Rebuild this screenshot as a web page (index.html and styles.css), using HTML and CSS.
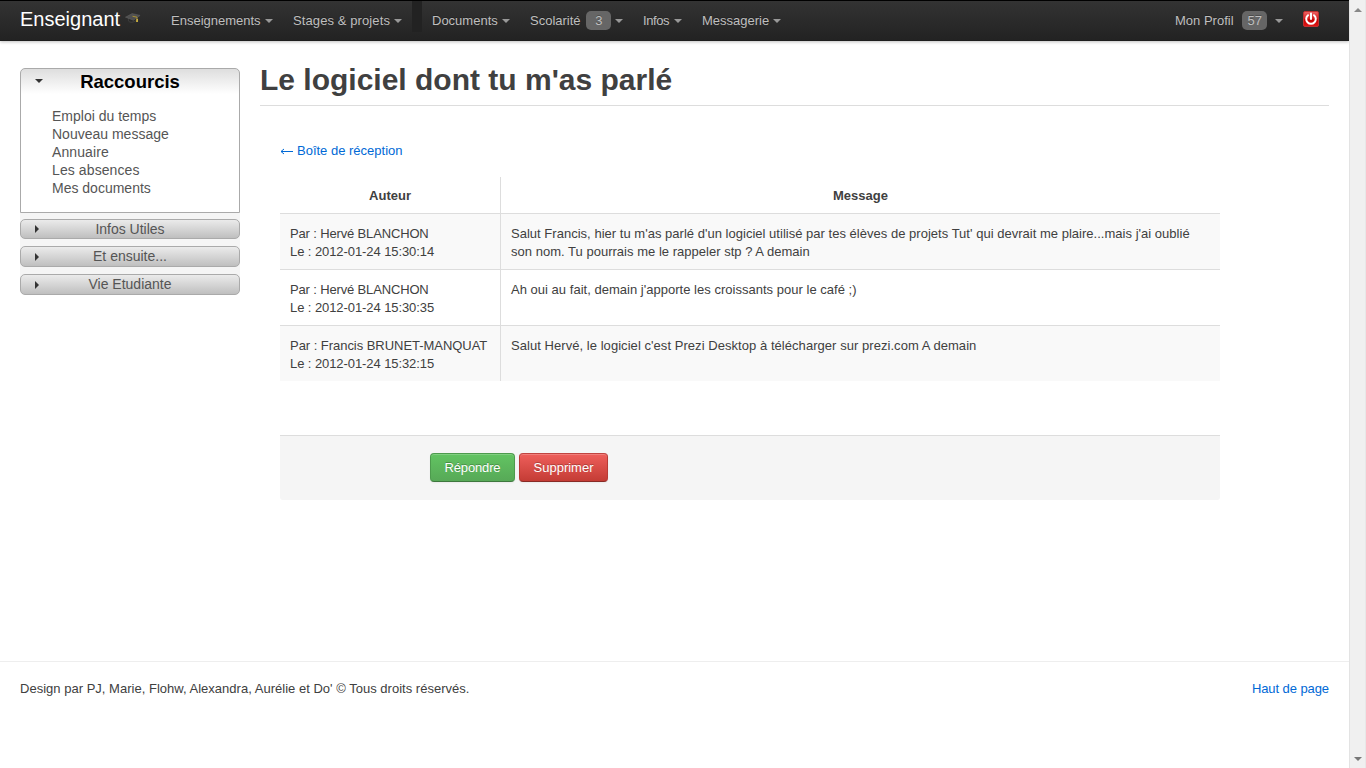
FILE: index.html
```html
<!DOCTYPE html>
<html lang="fr">
<head>
<meta charset="utf-8">
<title>Le logiciel dont tu m'as parlé</title>
<link rel="stylesheet" href="styles.css">
</head>
<body>
<div class="viewport">
<div class="page">
  <header class="topbar">
    <a class="brand">Enseignant</a>
    <svg class="cap" width="16" height="13" viewBox="0 0 18 14"><path d="M4 6v4q3 3 9-1V6z" fill="#292929" stroke="#494949" stroke-width=".7"/><path d="M.5 5.500 8 1.500 17 3.500 9.500 9z" fill="#505050" stroke="#636363" stroke-width=".6"/><path d="M8.500 4.500 13.500 5.500V9.500" fill="none" stroke="#b59a30" stroke-width="1"/><path d="M13 7.500h1.500v3.500h-2z" fill="#d9bc43"/></svg>
    <nav class="menu">
      <a class="item w-ens"><span>Enseignements</span><i class="caret"></i></a>
      <a class="item w-sta"><span>Stages &amp; projets</span><i class="caret"></i></a>
      <i class="divider"></i>
      <a class="item w-doc"><span>Documents</span><i class="caret"></i></a>
      <a class="item w-sco"><span>Scolarité</span><b class="badge">3</b><i class="caret"></i></a>
      <a class="item w-inf"><span>Infos</span><i class="caret"></i></a>
      <a class="item w-mes"><span>Messagerie</span><i class="caret"></i></a>
    </nav>
    <a class="item w-pro"><span>Mon Profil</span><b class="badge">57</b><i class="caret"></i></a>
    <svg class="power" width="16" height="16" viewBox="0 0 16 16"><defs><linearGradient id="r" x2="0" y2="1"><stop stop-color="#e66"/><stop offset=".5" stop-color="#d41c1c"/><stop offset=".55" stop-color="#c40000"/><stop offset="1" stop-color="#e01818"/></linearGradient></defs><rect x=".5" y=".5" width="15" height="15" rx="1.500" fill="url(#r)" stroke="#c03030"/><path d="M5 4.200A4.800 4.800 0 1 0 11 4.200M8 2.500V8" fill="none" stroke="#fff" stroke-width="2" stroke-linecap="round"/></svg>
  </header>
  <div class="columns">
    <aside class="side">
      <section class="open">
        <h3><i class="arrow down"></i>Raccourcis</h3>
        <ul>
          <li>Emploi du temps</li>
          <li>Nouveau message</li>
          <li class="wide">Annuaire</li>
          <li class="wide">Les absences</li>
          <li>Mes documents</li>
        </ul>
      </section>
      <div class="closed first"><i class="arrow"></i><span>Infos Utiles</span></div>
      <div class="closed"><i class="arrow"></i><span>Et ensuite...</span></div>
      <div class="closed"><i class="arrow"></i><span>Vie Etudiante</span></div>
    </aside>
    <main class="main">
      <h1>Le logiciel dont tu m'as parlé</h1>
      <div class="content">
        <a class="back link"><svg width="13" height="9" viewBox="0 0 13 9"><path d="M1 4.500H13M4 2 1 4.500 4 7" fill="none" stroke="currentColor"/></svg><span>Boîte de réception</span></a>
        <table>
          <tr><th class="author">Auteur</th><th>Message</th></tr>
          <tr class="odd"><td><span class="name">Par : Hervé BLANCHON</span><br><span class="date">Le : 2012-01-24 15:30:14</span></td><td>Salut Francis, hier tu m'as parlé d'un logiciel utilisé par tes élèves de projets Tut' qui devrait me plaire...mais j'ai oublié<br>son nom. Tu pourrais me le rappeler stp ? A demain</td></tr>
          <tr><td><span class="name">Par : Hervé BLANCHON</span><br><span class="date">Le : 2012-01-24 15:30:35</span></td><td>Ah oui au fait, demain j'apporte les croissants pour le café ;)</td></tr>
          <tr class="odd"><td><span class="long">Par : Francis BRUNET-MANQUAT</span><br><span class="date">Le : 2012-01-24 15:32:15</span></td><td class="last">Salut Hervé, le logiciel c'est Prezi Desktop à télécharger sur prezi.com A demain</td></tr>
        </table>
        <div class="actions"><button class="btn green">Répondre</button><button class="btn red">Supprimer</button></div>
      </div>
    </main>
  </div>
  <footer class="footer"><span>Design par PJ, Marie, Flohw, Alexandra, Aurélie et Do' © Tous droits réservés.</span><a class="link">Haut de page</a></footer>
</div>
<div class="scrollbar"><i class="up"></i><i class="dn"></i></div>
</div>
</body>
</html>
```
FILE: styles.css
```css
* { box-sizing: border-box; }
body { margin: 0; background: #fff; color: #404040; font: 13px/18px "Liberation Sans", Arial, sans-serif; overflow: hidden; }
.viewport { display: flex; height: 768px; }
.page { width: 1349px; display: flex; flex-direction: column; }
.topbar { height: 41px; flex: none; display: flex; align-items: flex-start; border-top: 1px solid #000; background: linear-gradient(#333, #222); box-shadow: 0 1px 3px rgba(0,0,0,.25), inset 0 -1px 0 rgba(0,0,0,.1); color: #bfbfbf; white-space: nowrap; }
.brand { width: 125px; padding: 8px 0 0 20px; font-size: 20px; line-height: 20px; color: #fff; }
.cap { margin-top: 11px; width: 16px; }
.menu { display: flex; margin-left: 20px; }
.item { height: 39px; padding: 1px 10px 0; display: flex; align-items: center; justify-content: space-between; text-shadow: 0 -1px 0 rgba(0,0,0,.25); }
.caret { border: 4px solid transparent; border-top-color: #999; border-bottom: 0; }
.w-ens { width: 122px; } .w-sta { width: 129px; } .w-doc { width: 98px; }
.w-sta span { letter-spacing: .1px; }
.w-sco { width: 113px; } .w-inf { width: 59px; } .w-mes { width: 99px; }
.w-inf span { letter-spacing: -.4px; }
.w-pro { width: 128px; margin-left: auto; margin-right: 10px; }
.divider { width: 10px; height: 31px; background: #222; }
.badge { background: #666; border-radius: 5px; width: 25px; text-align: center; height: 19px; font-weight: normal; line-height: 19px; margin-top: -1px; }
.w-sco .badge { margin-left: 2px; }
.w-pro .badge { margin-left: 1px; }
.power { margin: 10px 30px 0 0; }
.columns { display: flex; height: 620px; }
.side { width: 220px; margin: 27px 20px 0 20px; color: #555; font-size: 14px; align-self: flex-start; background: #f5f5f5; border-radius: 6px; }
.open { height: 145px; border: 1px solid #aaa; border-radius: 5px 5px 0 0; background: linear-gradient(#dedede, #fff 25px); }
.open h3 { margin: 0; height: 25px; line-height: 25px; font-size: 18.5px; color: #000; display: flex; align-items: center; justify-content: center; position: relative; }
.open ul { list-style: none; margin: 0; padding: 13px 0 0 31px; }
.wide { letter-spacing: .1px; }
.arrow { position: absolute; left: 14px; top: 50%; border: 4px solid transparent; border-left-color: #333; border-right: 0; margin-top: -4px; }
.arrow.down { border: 4px solid transparent; border-top-color: #333; border-bottom: 0; margin-top: -3px; }
.closed { position: relative; height: 21px; margin-top: 6px; border: 1px solid #aaa; border-radius: 5px; background: linear-gradient(#ebebeb, #bfbfbf); text-align: center; line-height: 18px; }
.closed.first { height: 20px; }
.closed + .closed { margin-top: 7px; }
.main { width: 1069px; }
h1 { margin: 21px 0 0; height: 44px; line-height: 36px; font-size: 30px; border-bottom: 1px solid #ddd; white-space: nowrap; }
.content { width: 940px; margin: 36px 0 0 20px; }
.link { color: #0069d6; }
.back { display: flex; align-items: center; gap: 4px; }
table { width: 940px; margin-top: 17px; border-collapse: separate; border-spacing: 0; table-layout: fixed; }
th, td { padding: 11px 10px 8px; vertical-align: top; text-align: left; height: 56px; white-space: nowrap; }
td { letter-spacing: .02px; }
.last { letter-spacing: .05px; }
.name { letter-spacing: -.15px; }
.long { letter-spacing: -.04px; }
.date { letter-spacing: -.08px; }
th { text-align: center; height: 36px; padding: 10px 10px 8px; }
.author { width: 220px; }
td { border-top: 1px solid #ddd; }
th + th, td + td { border-left: 1px solid #ddd; }
.odd td { background: #f9f9f9; }
.actions { height: 65px; margin-top: 54px; padding: 17px 0 0 150px; background: #f5f5f5; border-top: 1px solid #ddd; border-radius: 0 0 3px 3px; display: flex; gap: 4px; }
.btn { height: 29px; border: 1px solid; border-radius: 4px; font: 13px/18px "Liberation Sans", Arial, sans-serif; color: #fff; padding: 0; text-shadow: 0 -1px 0 rgba(0,0,0,.25); box-shadow: inset 0 1px 0 rgba(255,255,255,.2), 0 1px 2px rgba(0,0,0,.05); }
.green { letter-spacing: -.15px; width: 85px; background: linear-gradient(#62c462, #57a957); border-color: #4d9b4d #4d9b4d #3d773d; }
.red { width: 89px; background: linear-gradient(#ee5f5b, #c43c35); border-color: #c04440 #b83b35 #882a25; }
.footer { height: 107px; border-top: 1px solid #eee; padding: 18px 20px; display: flex; justify-content: space-between; }
.footer span { letter-spacing: .015px; }
.footer .link { letter-spacing: -.08px; }
.scrollbar { width: 17px; background: #f0f0f0; border-left: 1px solid #e3e3e3; border-right: 1px solid #e8e8e8; display: flex; flex-direction: column; justify-content: space-between; align-items: center; padding: 8px 0 7px; }
.up { border: 4px solid transparent; border-bottom-color: #888; border-top: 0; }
.dn { border: 4px solid transparent; border-top-color: #777; border-bottom: 0; }
```
